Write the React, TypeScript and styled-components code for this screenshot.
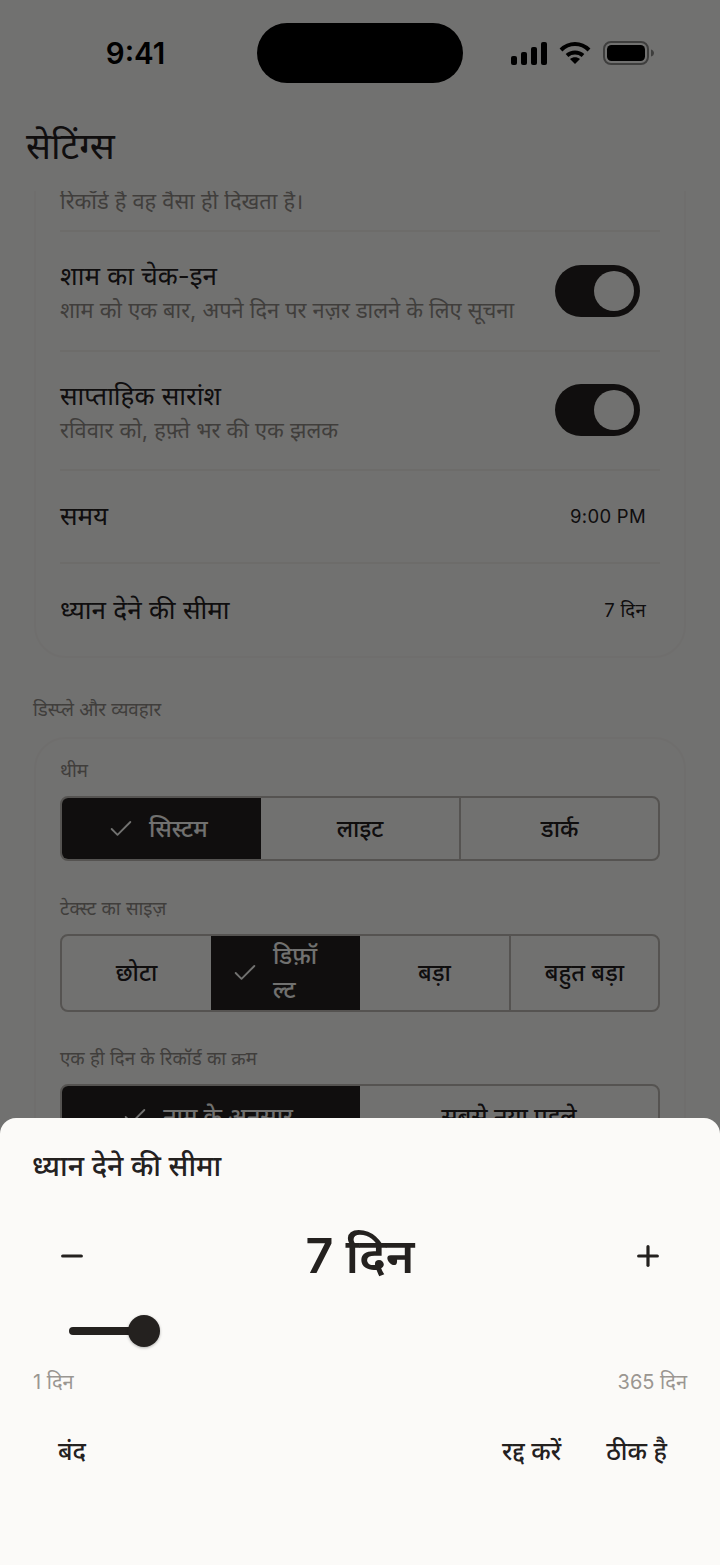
import React from "react";
import styled, { createGlobalStyle } from "styled-components";
import { Check, Minus, Plus } from "lucide-react";

const Global = createGlobalStyle`
  html, body { margin: 0; padding: 0; background: #fbfaf8; }
  * { box-sizing: border-box; }
  body { font-family: Inter, "Noto Sans", "Noto Sans Devanagari", sans-serif; color: #24211f; }
`;

const Screen = styled.div`
  position: relative;
  width: 720px;
  height: 1565px;
  overflow: hidden;
  background: #fbfaf8;
  display: flex;
  flex-direction: column;
`;
const StatusBar = styled.div`
  flex: none;
  height: 106px;
  display: grid;
  grid-template-columns: 257px 206px 257px;
  padding-top: 23px;
`;
const Time = styled.div`
  height: 60px;
  display: flex;
  align-items: center;
  justify-content: center;
  padding: 1px 0 0 14px;
  font: 600 29.5px/1 Inter, sans-serif;
  color: #000;
`;
const Island = styled.div`
  height: 60px;
  border-radius: 30px;
  background: #000;
`;
const StatusIcons = styled.div`
  height: 60px;
  display: flex;
  align-items: center;
  gap: 11px;
  padding-left: 47px;
  svg:last-child { margin-left: 1px; }
`;
const Title = styled.h1`
  flex: none;
  margin: 0;
  height: 85px;
  padding: 15px 0 0 26px;
  font-size: 37px;
  line-height: 50px;
  font-weight: 400;
`;
const Scroller = styled.div`
  flex: 1;
  min-height: 0;
  overflow: hidden;
  padding: 0 34px;
`;
const ScrollContent = styled.div`
  margin-top: -40px;
`;
const Card = styled.section`
  border: 2px solid #f6f4f1;
  border-radius: 32px;
  padding: 0 24px;
`;
const NoteRow = styled.div`
  height: 79px;
  padding-top: 33px;
  font-size: 21.8px;
  line-height: 30px;
  color: #8f8b86;
  border-bottom: 2px solid #f1efec;
`;
const ToggleRow = styled.div`
  height: 119.5px;
  display: flex;
  align-items: center;
  justify-content: space-between;
  padding-right: 20px;
  border-bottom: 2px solid #f1efec;
`;
const RowText = styled.div`
  display: flex;
  flex-direction: column;
  gap: 3px;
  padding-top: 4px;
`;
const RowTitle = styled.div`
  font-size: 26px;
  line-height: 32px;
`;
const RowSub = styled.div`
  font-size: 21.8px;
  line-height: 30px;
  color: #8f8b86;
`;
const Toggle = styled.div`
  width: 85px;
  height: 52px;
  border-radius: 26px;
  background: #24211f;
  display: flex;
  align-items: center;
  justify-content: flex-end;
  padding-right: 6px;
`;
const Thumb = styled.div`
  width: 40px;
  height: 40px;
  border-radius: 50%;
  background: #fbfaf8;
`;
const ValueRow = styled.div<{ $last?: boolean }>`
  height: ${(p) => (p.$last ? "92.5px" : "92.5px")};
  display: flex;
  align-items: center;
  justify-content: space-between;
  padding-right: 14px;
  border-bottom: ${(p) => (p.$last ? "none" : "2px solid #f1efec")};
`;
const Value = styled.div`
  font-size: 18.5px;
  letter-spacing: 0.3px;
`;
const SectionLabel = styled.h2`
  margin: 40px 0 15px -1px;
  height: 24px;
  font-size: 18.7px;
  line-height: 24px;
  font-weight: 400;
  color: #8f8b86;
`;
const FieldLabel = styled.div`
  height: 26px;
  margin: 34.5px 0 12px;
  font-size: 18.7px;
  line-height: 26px;
  color: #8f8b86;
  &:first-child { margin-top: 19px; }
`;
const Segmented = styled.div<{ $cols: number; $h: number }>`
  display: grid;
  grid-template-columns: repeat(${(p) => p.$cols}, 1fr);
  height: ${(p) => p.$h}px;
  width: 600px;
  border: 2px solid #bdb9b3;
  border-radius: 8px;
  overflow: hidden;
`;
const Segment = styled.div<{ $on?: boolean; $divided?: boolean }>`
  display: flex;
  align-items: center;
  justify-content: center;
  gap: 14px;
  padding: ${(p) => (p.$on ? "0 28px 0 20px" : "0 20px")};
  font-size: 23.5px;
  line-height: 34px;
  font-weight: 500;
  background: ${(p) => (p.$on ? "#24211f" : "transparent")};
  color: ${(p) => (p.$on ? "#fbfaf8" : "#24211f")};
  border-left: ${(p) => (p.$divided ? "2px solid #bdb9b3" : "none")};
  svg { flex: none; }
`;
const SegmentText = styled.span`
  min-width: 0;
  overflow-wrap: anywhere;
`;
const Scrim = styled.div`
  position: absolute;
  inset: 0;
  background: rgba(0, 0, 0, 0.55);
`;
const Sheet = styled.div`
  position: absolute;
  left: 0;
  right: 0;
  bottom: 0;
  height: 447px;
  border-radius: 16px 16px 0 0;
  background: #fbfaf8;
  padding: 29px 33px 0;
`;
const SheetTitle = styled.div`
  margin-left: -1px;
  font-size: 28.5px;
  line-height: 38px;
  font-weight: 500;
`;
const Stepper = styled.div`
  margin-top: 39px;
  height: 64px;
  display: flex;
  align-items: center;
  justify-content: space-between;
  padding: 0 23px;
`;
const BigValue = styled.div`
  font-size: 48.5px;
  line-height: 64px;
  font-weight: 600;
`;
const Slider = styled.div`
  margin: 27px 0 0 36px;
  height: 32px;
  display: flex;
  align-items: center;
`;
const SliderFill = styled.div`
  width: 70px;
  height: 8px;
  border-radius: 4px 0 0 4px;
  background: #24211f;
`;
const SliderThumb = styled.div`
  width: 32px;
  height: 32px;
  margin-left: -11px;
  border-radius: 50%;
  background: #24211f;
  box-shadow: 0 1px 3px rgba(0, 0, 0, 0.3);
`;
const RangeRow = styled.div`
  margin-top: 20px;
  display: flex;
  justify-content: space-between;
  font-size: 20px;
  line-height: 30px;
  color: #9a9691;
`;
const Actions = styled.div`
  margin-top: 35px;
  display: flex;
  align-items: center;
  gap: 5px;
  font-size: 24.8px;
  line-height: 38px;
  font-weight: 500;
`;
const ActionButton = styled.div<{ $push?: boolean }>`
  padding: 0 20px;
  margin-right: ${(p) => (p.$push ? "auto" : "0")};
  margin-left: ${(p) => (p.$push ? "5px" : "0")};
`;

const Seg = ({ on, divided, children }: { on?: boolean; divided?: boolean; children: React.ReactNode }) => (
  <Segment $on={on} $divided={divided}>
    {on && <Check size={28} strokeWidth={1.6} />}
    <SegmentText>{children}</SegmentText>
  </Segment>
);

const Row = ({ title, sub }: { title: string; sub: string }) => (
  <ToggleRow>
    <RowText>
      <RowTitle>{title}</RowTitle>
      <RowSub>{sub}</RowSub>
    </RowText>
    <Toggle>
      <Thumb />
    </Toggle>
  </ToggleRow>
);

export default function App() {
  return (
    <Screen>
      <Global />
      <StatusBar>
        <Time>9:41</Time>
        <Island />
        <StatusIcons>
          <svg width="38" height="24" viewBox="0 0 38 24" fill="#000">
            <rect x="1" y="15" width="6" height="9" rx="2" />
            <rect x="11" y="11" width="6" height="13" rx="2" />
            <rect x="21" y="6" width="6" height="18" rx="2" />
            <rect x="31" y="1" width="6" height="23" rx="2" />
          </svg>
          <svg width="32" height="24" viewBox="0 0 32 24" fill="none" stroke="#000" strokeWidth="4">
            <path d="M2 9C10 1 22 1 30 9" />
            <path d="M8 14.5C12.5 10.5 19.5 10.5 24 14.5" />
            <path d="M16 23l-5-5c3-2.5 7-2.5 10 0z" fill="#000" stroke="none" />
          </svg>
          <svg width="52" height="24" viewBox="0 0 52 24" fill="none">
            <rect x="1" y="1" width="44" height="22" rx="7" stroke="#000" strokeOpacity="0.45" strokeWidth="2" />
            <rect x="4" y="4" width="38" height="16" rx="4.5" fill="#000" />
            <path d="M48 8.5c2 .5 3 2 3 3.5s-1 3-3 3.5z" fill="#000" fillOpacity="0.45" />
          </svg>
        </StatusIcons>
      </StatusBar>
      <Title>सेटिंग्स</Title>
      <Scroller>
        <ScrollContent>
          <Card>
            <NoteRow>रिकॉर्ड है वह वैसा ही दिखता है।</NoteRow>
            <Row title="शाम का चेक-इन" sub="शाम को एक बार, अपने दिन पर नज़र डालने के लिए सूचना" />
            <Row title="साप्ताहिक सारांश" sub="रविवार को, हफ़्ते भर की एक झलक" />
            <ValueRow>
              <RowTitle>समय</RowTitle>
              <Value>9:00 PM</Value>
            </ValueRow>
            <ValueRow $last>
              <RowTitle>ध्यान देने की सीमा</RowTitle>
              <Value>7 दिन</Value>
            </ValueRow>
          </Card>
          <SectionLabel>डिस्प्ले और व्यवहार</SectionLabel>
          <Card>
            <FieldLabel>थीम</FieldLabel>
            <Segmented $cols={3} $h={65}>
              <Seg on>सिस्टम</Seg>
              <Seg>लाइट</Seg>
              <Seg divided>डार्क</Seg>
            </Segmented>
            <FieldLabel>टेक्स्ट का साइज़</FieldLabel>
            <Segmented $cols={4} $h={78}>
              <Seg>छोटा</Seg>
              <Seg on>डिफ़ॉल्ट</Seg>
              <Seg>बड़ा</Seg>
              <Seg divided>बहुत बड़ा</Seg>
            </Segmented>
            <FieldLabel>एक ही दिन के रिकॉर्ड का क्रम</FieldLabel>
            <Segmented $cols={2} $h={65}>
              <Seg on>नाम के अनुसार</Seg>
              <Seg>सबसे नया पहले</Seg>
            </Segmented>
          </Card>
        </ScrollContent>
      </Scroller>
      <Scrim />
      <Sheet>
        <SheetTitle>ध्यान देने की सीमा</SheetTitle>
        <Stepper>
          <Minus size={32} strokeWidth={2.4} />
          <BigValue>7 दिन</BigValue>
          <Plus size={32} strokeWidth={2.4} />
        </Stepper>
        <Slider>
          <SliderFill />
          <SliderThumb />
        </Slider>
        <RangeRow>
          <span>1 दिन</span>
          <span>365 दिन</span>
        </RangeRow>
        <Actions>
          <ActionButton $push>बंद</ActionButton>
          <ActionButton>रद्द करें</ActionButton>
          <ActionButton>ठीक है</ActionButton>
        </Actions>
      </Sheet>
    </Screen>
  );
}
